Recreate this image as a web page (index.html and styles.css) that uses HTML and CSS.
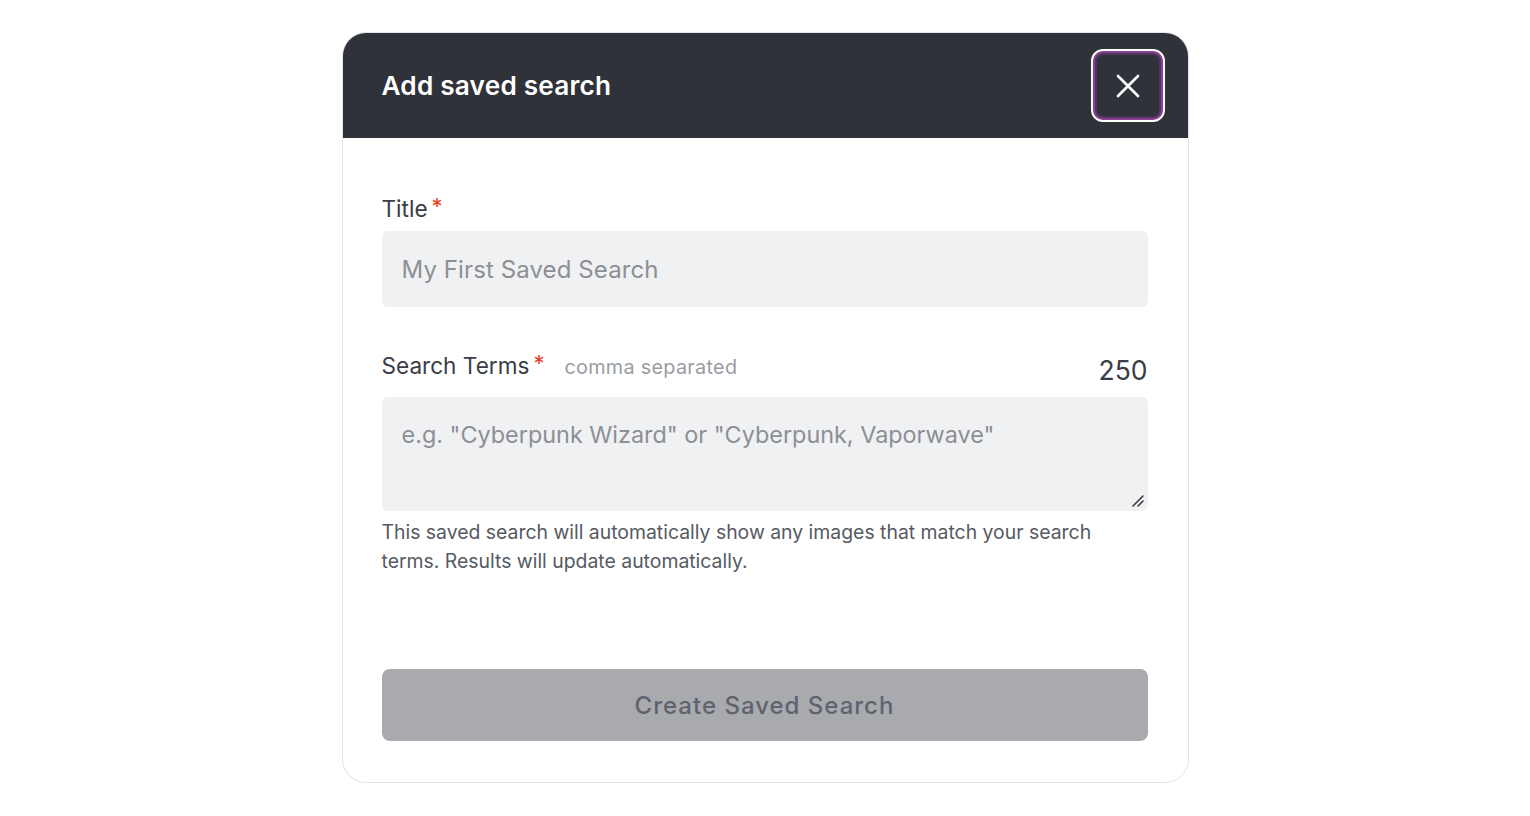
FILE: index.html
```html
<!DOCTYPE html>
<html lang="en">
<head>
<meta charset="utf-8">
<title>Add saved search</title>
<link rel="stylesheet" href="styles.css">
</head>
<body>
<div class="page">
  <div class="modal">
    <div class="modal-header">
      <h2 class="modal-title">Add saved search</h2>
      <button class="close-btn" aria-label="Close">
        <svg width="26" height="26" viewBox="0 0 26 26" fill="none" stroke="#ffffff" stroke-width="2.6" stroke-linecap="round">
          <path d="M3 3 L23 23 M23 3 L3 23"/>
        </svg>
      </button>
    </div>
    <div class="modal-body">
      <div class="field">
        <label class="label"><span>Title</span><span class="req">*</span></label>
        <input class="input" type="text" placeholder="My First Saved Search">
      </div>
      <div class="field field-terms">
        <div class="label-row">
          <label class="label"><span>Search Terms</span><span class="req">*</span><span class="hint">comma separated</span></label>
          <span class="counter">250</span>
        </div>
        <div class="textarea-wrap">
          <textarea class="textarea" placeholder="e.g. &quot;Cyberpunk Wizard&quot; or &quot;Cyberpunk, Vaporwave&quot;"></textarea>
          <svg class="grip" width="14" height="14" viewBox="0 0 14 14" fill="none" stroke="#3a3d45" stroke-width="1.6" stroke-linecap="round">
            <path d="M2 12 L12 2 M7 12 L12 7"/>
          </svg>
        </div>
        <p class="help">This saved search will automatically show any images that match your search terms. Results will update automatically.</p>
      </div>
      <button class="submit" disabled>Create Saved Search</button>
    </div>
  </div>
</div>
</body>
</html>
```
FILE: styles.css
```css
* { box-sizing: border-box; }
html, body { margin: 0; padding: 0; background: #ffffff; }
body { font-family: "Inter", "DejaVu Sans", sans-serif; color: #3a3d45; }

.page {
  display: flex;
  justify-content: center;
  padding-top: 32px;
}

.modal {
  width: 847px;
  border: 1.5px solid #e3e3e8;
  border-radius: 24px;
  overflow: hidden;
  background: #fff;
}

.modal-header {
  height: 105px;
  background: #2f3238;
  display: flex;
  align-items: center;
  justify-content: space-between;
  padding: 0 23px 0 39px;
}

.modal-title {
  margin: 0;
  color: #ffffff;
  font-size: 26.2px;
  font-weight: 600;
  letter-spacing: 0.2px;
}

.close-btn {
  width: 74px;
  height: 73px;
  border-radius: 12px;
  border: 2px solid #ffffff;
  background: #2f3238;
  box-shadow: inset 0 0 0 2px #8a3f98, inset 0 0 0 4px rgba(120, 60, 140, 0.4);
  display: flex;
  align-items: center;
  justify-content: center;
  padding: 0;
  cursor: pointer;
}

.modal-body {
  padding: 56px 40px 41px 39px;
}

.field { display: flex; flex-direction: column; }

.label {
  font-size: 22.6px;
  line-height: 30px;
  color: #3a3d45;
  font-weight: 400;
  display: flex;
  align-items: baseline;
}
.req { color: #e8401f; margin-left: 4px; font-size: 22px; position: relative; top: -3px; }
.hint { color: #9a9ca3; font-size: 19.8px; margin-left: 20px; letter-spacing: 0.3px; }

.input {
  margin-top: 7px;
  height: 76px;
  border: none;
  border-radius: 6px;
  background: #f0f1f3;
  padding: 0 20px;
  font-family: inherit;
  font-size: 24px;
  color: #3a3d45;
  outline: none;
}
.input::placeholder { color: #8c8f95; letter-spacing: 0.1px; }
.textarea::placeholder { color: #8c8f95; }

.field-terms { margin-top: 44px; }

.label-row {
  display: flex;
  justify-content: space-between;
  align-items: flex-end;
}
.counter { font-size: 26.5px; line-height: 30px; color: #3a3d45; position: relative; top: 3px; }

.textarea-wrap {
  position: relative;
  margin-top: 15px;
  display: flex;
}

.textarea {
  flex: 1;
  height: 114px;
  border: none;
  border-radius: 6px;
  background: #f0f1f3;
  padding: 22px 20px;
  font-family: inherit;
  font-size: 23.4px;
  line-height: 32px;
  color: #3a3d45;
  outline: none;
  resize: none;
}

.grip {
  position: absolute;
  right: 3px;
  bottom: 3px;
  pointer-events: none;
}

.help {
  margin: 7px 0 0;
  font-size: 19.4px;
  line-height: 29px;
  color: #555a63;
  max-width: 740px;
}

.submit {
  margin-top: 93px;
  width: 100%;
  height: 72px;
  border: none;
  border-radius: 8px;
  background: #a9aaad;
  color: #5f6370;
  font-family: inherit;
  font-size: 24px;
  letter-spacing: 1px;
  font-weight: 500;
}
```
